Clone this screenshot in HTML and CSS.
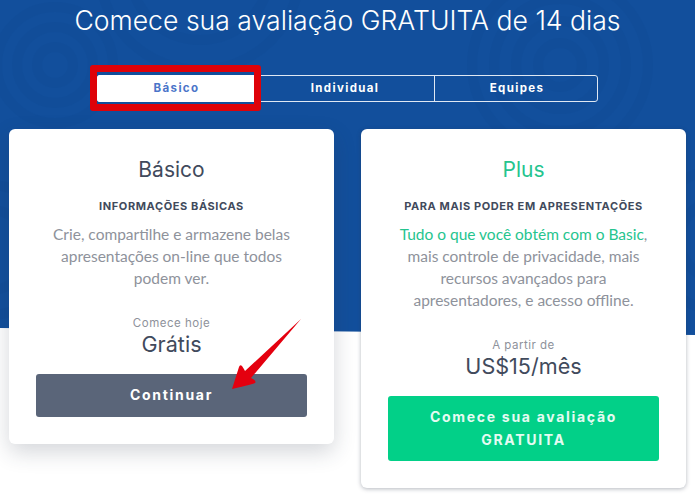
FILE: index.html
```html
<!DOCTYPE html>
<html lang="pt">
<head>
<meta charset="utf-8">
<title>Comece sua avaliação</title>
<link rel="stylesheet" href="styles.css">
</head>
<body>
<div class="page">
  <svg class="hero" viewBox="0 0 695 335" preserveAspectRatio="none" aria-hidden="true">
    <polygon class="hero-fill" points="0,0 695,0 695,335 0,328"/>
    <g class="swirl">
      <circle cx="55" cy="65" r="18"/><circle cx="55" cy="65" r="38"/><circle cx="55" cy="65" r="58"/>
      <circle cx="560" cy="65" r="22"/><circle cx="560" cy="65" r="44"/><circle cx="560" cy="65" r="66"/><circle cx="560" cy="65" r="88"/>
      <circle cx="200" cy="-30" r="70"/><circle cx="200" cy="-30" r="100"/>
      <circle cx="720" cy="240" r="40"/><circle cx="720" cy="240" r="70"/>
      <circle cx="-10" cy="250" r="40"/><circle cx="-10" cy="250" r="65"/>
    </g>
  </svg>
  <h1 class="title">Comece sua avaliação GRATUITA de 14 dias</h1>
  <div class="tabs">
    <div class="tab tab-active">Básico</div>
    <div class="tab tab-mid">Individual</div>
    <div class="tab tab-last">Equipes</div>
  </div>
  <div class="cards">
    <section class="card card-basic">
      <h2 class="plan">Básico</h2>
      <h3 class="sub">INFORMAÇÕES BÁSICAS</h3>
      <p class="desc">Crie, compartilhe e armazene belas apresentações on-line que todos podem ver.</p>
      <div class="from">Comece hoje</div>
      <div class="price">Grátis</div>
      <a class="btn btn-gray">Continuar</a>
    </section>
    <section class="card card-plus">
      <h2 class="plan plan-green">Plus</h2>
      <h3 class="sub">PARA MAIS PODER EM APRESENTAÇÕES</h3>
      <p class="desc"><span class="hl">Tudo o que você obtém com o Basic</span>, mais controle de privacidade, mais recursos avançados para apresentadores, e acesso offline.</p>
      <div class="from">A partir de</div>
      <div class="price">US$15/mês</div>
      <a class="btn btn-green">Comece sua avaliação GRATUITA</a>
    </section>
  </div>
  <div class="redbox"></div>
  <svg class="arrow" viewBox="0 0 695 496" aria-hidden="true">
    <path d="M301 319 L251 378 Q257 381 255 383 Q254 384 232 389 L239 367 Q240 364 242 366 Q244 369 245 371 Z"/>
  </svg>
</div>
</body>
</html>
```
FILE: styles.css
```css
* { box-sizing: border-box; }
html, body { margin: 0; padding: 0; background: #fff; }
.page {
  position: relative;
  width: 695px;
  height: 496px;
  overflow: hidden;
  font-family: "Lato", "Liberation Sans", sans-serif;
}
.hero { position: absolute; left: 0; top: 0; width: 695px; height: 335px; }
.hero-fill { fill: #124f9c; }
.swirl { fill: none; stroke: #0f4a94; stroke-width: 10; opacity: .3; }
.title {
  position: relative;
  margin: 0;
  padding-top: 3px;
  height: 75px;
  text-align: center;
  color: #fff;
  font-family: "Inter", "Liberation Sans", sans-serif;
  font-weight: 300;
  font-size: 26.6px;
  line-height: 34px;
  white-space: nowrap;
}
.tabs {
  position: relative;
  display: grid;
  grid-template-columns: 158px 178px 165px;
  width: 501px;
  height: 27px;
  margin-left: 97px;
  border: 1px solid #dfe8f3;
  border-radius: 3px;
}
.tab {
  display: flex;
  align-items: center;
  justify-content: center;
  padding-bottom: 2px;
  color: #fff;
  font-family: "Inter", "Liberation Sans", sans-serif;
  font-weight: 700;
  font-size: 11.5px;
  letter-spacing: 1.35px;
}
.tab-active { background: #fff; color: #4a74c9; margin: -1px 0 -1px -1px; border-radius: 3px 0 0 3px; }
.tab-last { border-left: 1px solid #dfe8f3; }
.cards {
  position: relative;
  display: grid;
  grid-template-columns: 325px 325px;
  column-gap: 27px;
  align-items: start;
  margin: 27px 0 0 9px;
}
.card {
  display: flex;
  flex-direction: column;
  align-items: center;
  padding: 28px 27px 27px;
  background: #fff;
  border-radius: 6px;
  text-align: center;
}
.card-basic { box-shadow: 0 8px 22px rgba(40,50,70,.2); }
.card-plus { box-shadow: 0 1px 4px rgba(40,50,70,.35); }
.plan {
  margin: 0;
  color: #414a5c;
  font-family: "Inter", "Liberation Sans", sans-serif;
  font-weight: 400;
  font-size: 21px;
  line-height: 26px;
}
.plan-green { color: #25c48e; }
.sub {
  margin: 16px 0 0;
  color: #414a5c;
  font-family: "Inter", "Liberation Sans", sans-serif;
  font-weight: 700;
  font-size: 11px;
  line-height: 14px;
  letter-spacing: .6px;
  white-space: nowrap;
}
.desc {
  margin: 10px 0 0;
  color: #8e929b;
  font-size: 15.5px;
  line-height: 22px;
}
.card-basic .desc { padding: 0 10px; }
.card-plus .desc { padding: 0; }
.hl { color: #25c48e; }
.from {
  margin-top: 27px;
  color: #8e929b;
  font-family: "Inter", "Liberation Sans", sans-serif;
  font-size: 11.5px;
  line-height: 14px;
  letter-spacing: .5px;
}
.price {
  color: #414a5c;
  font-family: "Inter", "Liberation Sans", sans-serif;
  font-size: 21.6px;
  line-height: 26px;
  margin-top: 1px;
}
.btn {
  display: flex;
  align-items: center;
  justify-content: center;
  width: 271px;
  margin-top: 17px;
  padding: 10px 30px;
  border-radius: 3px;
  color: #fff;
  font-family: "Inter", "Liberation Sans", sans-serif;
  font-weight: 700;
  font-size: 14px;
  line-height: 22.5px;
  letter-spacing: 1.7px;
}
.btn-gray { background: #5a6579; }
.btn-green { background: #02d088; color: #e4fbf2; }
.redbox {
  position: absolute;
  left: 90px;
  top: 65px;
  width: 171px;
  height: 46px;
  border: 7px solid #de0209;
  border-radius: 3px;
}
.arrow { position: absolute; left: 0; top: 0; width: 695px; height: 496px; pointer-events: none; }
.arrow path { fill: #e4000f; }
```
